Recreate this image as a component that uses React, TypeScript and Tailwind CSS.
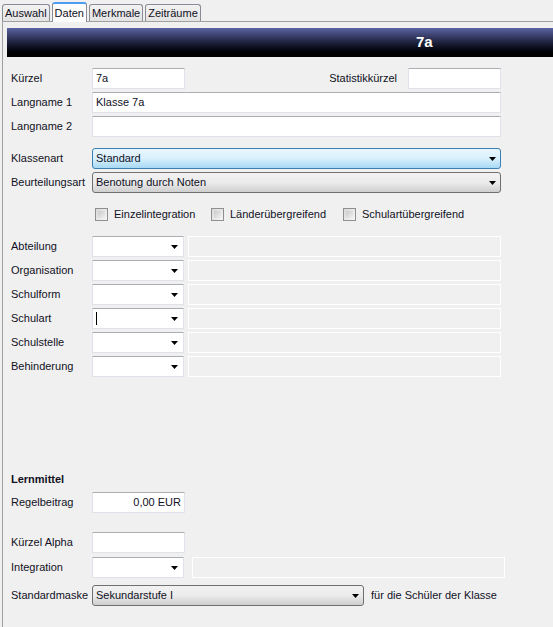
import React from 'react';

const font = { fontFamily: '"Liberation Sans", Arial, sans-serif' };

const Arrow: React.FC = () => (
    <svg width="7" height="4" viewBox="0 0 7 4" className="shrink-0">
        <path d="M0 0 H7 L3.5 4 Z" fill="#000" />
    </svg>
);

const TextBox: React.FC<{ w: string; value?: string; right?: boolean }> = ({ w, value, right }) => (
    <div className={`${w} h-[21px] bg-white border border-[#dfe3e9] border-t-[#acaeb4] flex items-center px-[3px] ${right ? 'justify-end' : ''}`}>
        {value}
    </div>
);

const Combo: React.FC<{ caret?: boolean }> = ({ caret }) => (
    <div className="w-[92px] h-[21px] bg-white border border-[#dfe3e9] border-t-[#acaeb4] flex items-center pl-[3px] pr-[5px]">
        <div className="flex-1 flex items-center">{caret && <span className="w-px h-[13px] bg-black" />}</div>
        <Arrow />
    </div>
);

const Dead: React.FC<{ w: string; ml: string }> = ({ w, ml }) => (
    <div className={`${w} ${ml} h-[21px] border border-white bg-[#f0f0f0]`} />
);

const Select: React.FC<{ w: string; value: string; focused?: boolean }> = ({ w, value, focused }) => (
    <div
        className={`${w} h-[21px] rounded-[3px] border flex items-center pl-[3px] pr-[4px] ${
            focused
                ? 'border-[#3c7fb1] bg-gradient-to-b from-[#eaf6fd] via-[#d9f0fc] to-[#a7d9f5]'
                : 'border-[#707070] bg-gradient-to-b from-[#f2f2f2] via-[#ebebeb] to-[#cfcfcf]'
        }`}
    >
        <span className="flex-1">{value}</span>
        <Arrow />
    </div>
);

const Label: React.FC<{ children: React.ReactNode }> = ({ children }) => (
    <div className="w-[81px] shrink-0 whitespace-nowrap">{children}</div>
);

const Check: React.FC<{ label: string; w: string }> = ({ label, w }) => (
    <div className={`${w} flex items-center`}>
        <div className="w-[13px] h-[13px] border border-[#8e8f8f] bg-gradient-to-br from-[#d9d9d9] to-[#f6f6f6] p-[2px]">
            <div className="w-full h-full bg-gradient-to-br from-[#cbcbcb] to-[#f0f0f0]" />
        </div>
        <span className="ml-[6px]">{label}</span>
    </div>
);

const Tab: React.FC<{ label: string; active?: boolean }> = ({ label, active }) => (
    <div
        className={`relative px-[2px] border border-b-0 rounded-t-[3px] flex items-center ${
            active
                ? 'h-[20px] bg-[#fcfcfc] border-[#898c95] -mb-px z-10 border-t-2 border-t-[#4d9df0]'
                : 'h-[17px] bg-gradient-to-b from-[#f2f2f2] to-[#e3e3e3] border-[#898c95]'
        }`}
    >
        {label}
    </div>
);

const App: React.FC = () => {
    const rows = ['Abteilung', 'Organisation', 'Schulform', 'Schulart', 'Schulstelle', 'Behinderung'];

    return (
        <div className="w-[553px] h-[627px] bg-[#f0f0f0] overflow-hidden text-[11px] text-[#10101e]" style={font}>
            <div className="h-[21px] flex items-end gap-[2px] pl-[2px]">
                <Tab label="Auswahl" />
                <Tab label="Daten" active />
                <Tab label="Merkmale" />
                <Tab label="Zeiträume" />
            </div>

            <div className="ml-[2px] h-[606px] border-l border-t border-[#a0a0a0]">
                <div className="ml-[4px] mt-[6px] h-[29px] bg-gradient-to-b from-[#5c64a4] to-[#000] flex items-center pl-[409px]">
                    <span className="text-white font-bold text-[15px]">7a</span>
                </div>

                <div className="pl-[8px]">
                    <div className="mt-[11px] flex items-center h-[21px]">
                        <Label>Kürzel</Label>
                        <TextBox w="w-[93px]" value="7a" />
                        <div className="w-[223px] text-right pr-[11px]">Statistikkürzel</div>
                        <TextBox w="w-[93px]" />
                    </div>
                    <div className="mt-[3px] flex items-center h-[21px]">
                        <Label>Langname 1</Label>
                        <TextBox w="w-[409px]" value="Klasse 7a" />
                    </div>
                    <div className="mt-[3px] flex items-center h-[21px]">
                        <Label>Langname 2</Label>
                        <TextBox w="w-[409px]" />
                    </div>

                    <div className="mt-[11px] flex items-center h-[21px]">
                        <Label>Klassenart</Label>
                        <Select w="w-[409px]" value="Standard" focused />
                    </div>
                    <div className="mt-[3px] flex items-center h-[21px]">
                        <Label>Beurteilungsart</Label>
                        <Select w="w-[409px]" value="Benotung durch Noten" />
                    </div>

                    <div className="mt-[15px] flex items-center h-[13px] pl-[84px]">
                        <Check label="Einzelintegration" w="w-[116px]" />
                        <Check label="Länderübergreifend" w="w-[132px]" />
                        <Check label="Schulartübergreifend" w="w-[140px]" />
                    </div>

                    <div className="mt-[15px] flex flex-col gap-[3px]">
                        {rows.map((r) => (
                            <div key={r} className="flex items-center h-[21px]">
                                <Label>{r}</Label>
                                <Combo caret={r === 'Schulart'} />
                                <Dead w="w-[313px]" ml="ml-[4px]" />
                            </div>
                        ))}
                    </div>

                    <div className="mt-[95px] h-[14px] flex items-center font-bold">Lernmittel</div>
                    <div className="mt-[6px] flex items-center h-[21px]">
                        <Label>Regelbeitrag</Label>
                        <TextBox w="w-[93px]" value="0,00 EUR" right />
                    </div>

                    <div className="mt-[19px] flex items-center h-[21px]">
                        <Label>Kürzel Alpha</Label>
                        <TextBox w="w-[93px]" />
                    </div>
                    <div className="mt-[4px] flex items-center h-[21px]">
                        <Label>Integration</Label>
                        <Combo />
                        <Dead w="w-[313px]" ml="ml-[8px]" />
                    </div>
                    <div className="mt-[7px] flex items-center h-[21px]">
                        <Label>Standardmaske</Label>
                        <Select w="w-[272px]" value="Sekundarstufe I" />
                        <span className="ml-[7px]">für die Schüler der Klasse</span>
                    </div>
                </div>
            </div>
        </div>
    );
};

export default App;
